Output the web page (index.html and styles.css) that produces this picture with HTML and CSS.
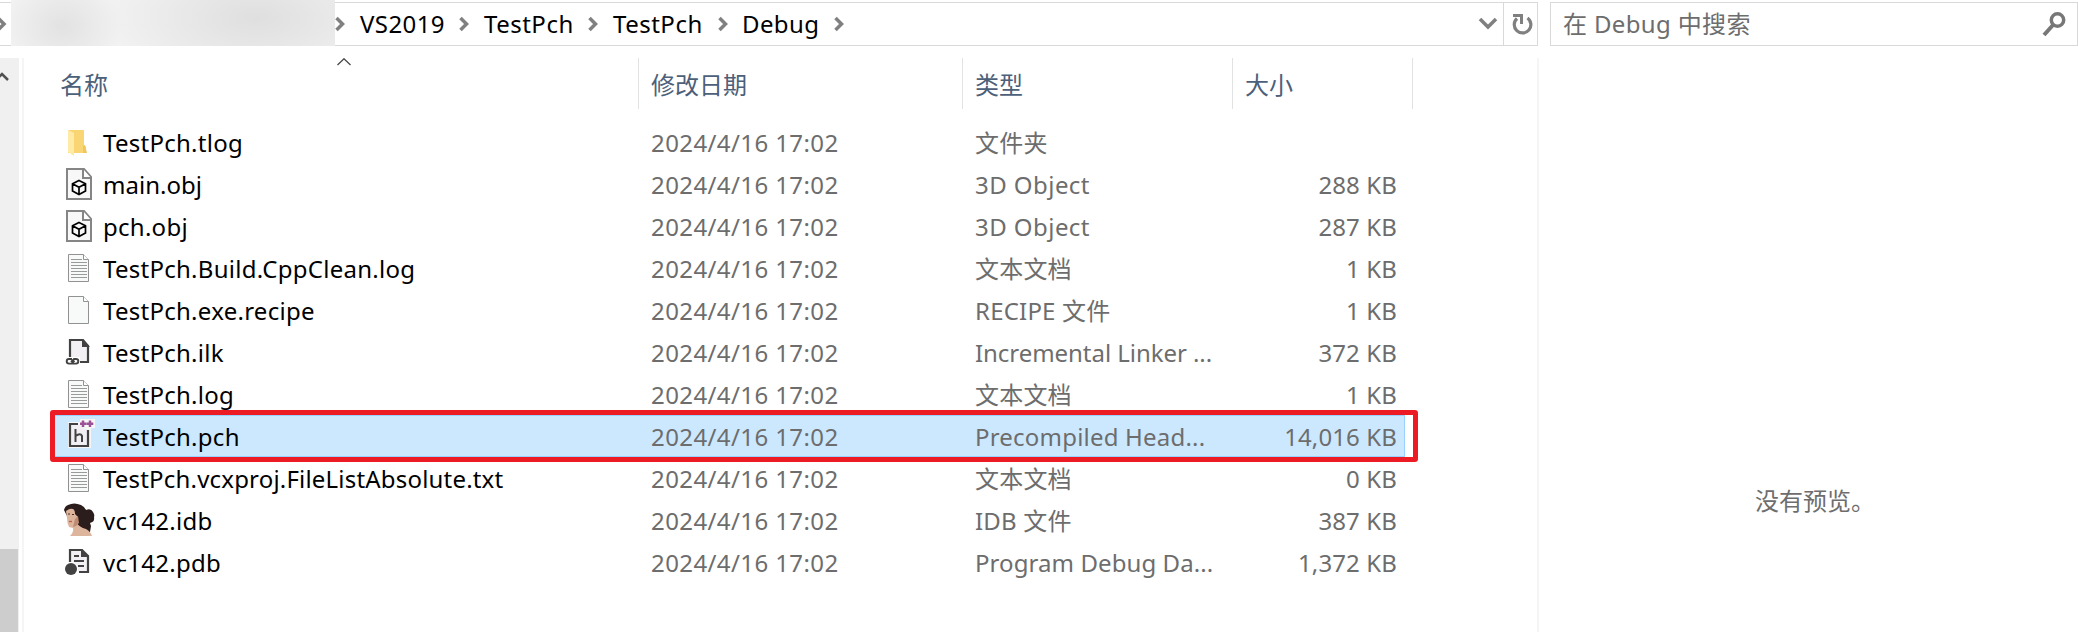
FILE: index.html
```
<!DOCTYPE html>
<html lang="zh-CN">
<head>
<meta charset="utf-8">
<title>Debug</title>
<link rel="stylesheet" href="styles.css">
</head>
<body>
<svg class="defs" aria-hidden="true">
  <symbol id="folder" viewBox="0 0 32 36"><path d="M4 6h16v15l2 2v6H4z" fill="#f9d673"/><path d="M4 6l6 3v23l-6-4z" fill="#ffeba5"/><path d="M19 22l2-1 2 8h-4z" fill="#efc85d"/></symbol>
  <symbol id="obj" viewBox="0 0 32 36"><path d="M3 3h17l7 8v22H3z" fill="#f8f8f8" stroke="#858585" stroke-width="2"/><path d="M19 3v9h8" fill="#fff" stroke="#858585" stroke-width="2"/><path d="M15 14.500l6.500 3.200v7.200L15 28.500l-6.500-3.600v-7.200zM8.500 17.700l6.500 3.500 6.500-3.500M15 21.200v7" fill="none" stroke="#000" stroke-width="1.700"/></symbol>
  <symbol id="page" viewBox="0 0 32 36"><path d="M4.500 4.500h15l5 5v22h-20z" fill="#f8f9f9" stroke="#929292"/><path d="M19.500 4.500v5h5" fill="#fff" stroke="#929292"/></symbol>
  <symbol id="text" viewBox="0 0 32 36"><use href="#page"/><path d="M7 9.500h11M7 12.500h16M7 15.500h16M7 18.500h16M7 21.500h16M7 24.500h16M7 27.500h16" stroke="#9a9a9a"/></symbol>
  <symbol id="ilk" viewBox="0 0 32 36"><path d="M6 23V6h13l5 6v16h-8" fill="#f2f0f4" stroke="#424242" stroke-width="2.200"/><path d="M18 5v8h8z" fill="#424242"/><rect x="1" y="23" width="15" height="9" fill="#fff"/><path d="M8 25H5a2.300 2.300 0 0 0 0 4.600h2.500l3-3M8 29.600h4a2.300 2.300 0 0 0 0-4.600h-2l-3 3" fill="none" stroke="#424242" stroke-width="1.900"/></symbol>
  <symbol id="pch" viewBox="0 0 32 36"><path d="M4 4h12V1h15v9h-4v20H4z" fill="#f6f6f6"/><path d="M14 6H6v22h18V12" fill="#f1eff3" stroke="#424242" stroke-width="2.200"/><path d="M11.500 11v13M11.500 18q5-3.500 6.500 0v6" fill="none" stroke="#424242" stroke-width="2"/><path d="M19 2.500v6.500M16 5.700h6.500M26 2.500v6.500M22.800 5.700h6.500" stroke="#9b4f96" stroke-width="2.500"/></symbol>
  <symbol id="portrait" viewBox="0 0 32 36"><path d="M1 8Q2 4 5 3q6-3 13 0 4 2 5 5 5-2 7 2 2 3 1 5 1 5-4 6l1 3-1 6-5 2-8-5-3-8-7-5z" fill="#2b1d1c"/><path d="M3 9q4-3 7-2 2 1 2 5l3 3-1 6q2 4 9 6 5 3 6 7H7q4-4 3-8l-4-1q-2-4-2-9z" fill="#ddb59c"/><path d="M5 12h2M9 12.500h2" stroke="#4b302a"/><path d="M6 19.500h3" stroke="#bd5a50" stroke-width="1.300"/><path d="M12 17l3-3 1 7-3 3-3 1z" fill="#bd8b73"/></symbol>
  <symbol id="pdb" viewBox="0 0 32 36"><path d="M6 18V6h12l6 6v16h-9" fill="#f2f0f4" stroke="#424242" stroke-width="2.200"/><path d="M17 5v8h8zM10 11h5v2h-5zM10 16h10v2H10zM14 21h6v2h-6z" fill="#424242"/><circle cx="7" cy="25" r="7" fill="#fff"/><circle cx="7" cy="25" r="6" fill="#424242"/></symbol>
  <symbol id="chev" viewBox="0 0 10 16"><path d="M1.500 2l6 6-6 6" fill="none" stroke="#808080" stroke-width="3.500"/></symbol>
</svg>
<div class="toolbar">
  <div class="address">
    <svg class="edge-chevron"><use href="#chev"/></svg>
    <div class="hidden-path"></div>
    <svg class="chevron"><use href="#chev"/></svg><span class="crumb year">VS2019</span>
    <svg class="chevron"><use href="#chev"/></svg><span class="crumb project">TestPch</span>
    <svg class="chevron"><use href="#chev"/></svg><span class="crumb project">TestPch</span>
    <svg class="chevron"><use href="#chev"/></svg><span class="crumb debug">Debug</span>
    <svg class="chevron"><use href="#chev"/></svg>
    <svg class="dropdown" viewBox="0 0 20 16"><path d="M2 3l8 8 8-8" fill="none" stroke="#808080" stroke-width="3.500"/></svg>
    <div class="refresh"><svg viewBox="0 0 22 26"><path d="M6 7.500A8.300 8.300 0 1 0 16.500 7" fill="none" stroke="#808080" stroke-width="3.200"/><path d="M2 3h10v10H9V6H2z" fill="#808080"/></svg></div>
  </div>
  <div class="search"><span>在 Debug 中搜索</span><svg viewBox="0 0 26 26"><circle cx="16.500" cy="9" r="6.200" fill="none" stroke="#777" stroke-width="3.500"/><path d="M12 14L3 24" stroke="#777" stroke-width="4"/></svg></div>
</div>
<main class="body">
  <div class="scrollbar"><svg class="up" viewBox="0 0 10 10"><path d="M-4 8l6-6 6 6" fill="none" stroke="#505050" stroke-width="2.500"/></svg><div class="thumb"></div></div>
  <section class="files">
    <div class="columns">
      <div class="col col-name">名称<svg class="sort" viewBox="0 0 14 8"><path d="M.5 7L7 .7 13.500 7" fill="none" stroke="#444" stroke-width="1.200"/></svg></div>
      <div class="col">修改日期</div><div class="col">类型</div><div class="col">大小</div>
    </div>
    <div class="row"><svg><use href="#folder"/></svg><span class="name">TestPch.tlog</span><span class="date">2024/4/16 17:02</span><span class="type">文件夹</span><span class="size"></span></div>
    <div class="row"><svg><use href="#obj"/></svg><span class="name plain">main.obj</span><span class="date">2024/4/16 17:02</span><span class="type wide">3D Object</span><span class="size">288 KB</span></div>
    <div class="row"><svg><use href="#obj"/></svg><span class="name">pch.obj</span><span class="date">2024/4/16 17:02</span><span class="type wide">3D Object</span><span class="size">287 KB</span></div>
    <div class="row"><svg><use href="#text"/></svg><span class="name">TestPch.Build.CppClean.log</span><span class="date">2024/4/16 17:02</span><span class="type">文本文档</span><span class="size">1 KB</span></div>
    <div class="row"><svg><use href="#page"/></svg><span class="name">TestPch.exe.recipe</span><span class="date">2024/4/16 17:02</span><span class="type">RECIPE 文件</span><span class="size">1 KB</span></div>
    <div class="row"><svg><use href="#ilk"/></svg><span class="name">TestPch.ilk</span><span class="date">2024/4/16 17:02</span><span class="type tight">Incremental Linker ...</span><span class="size">372 KB</span></div>
    <div class="row"><svg><use href="#text"/></svg><span class="name">TestPch.log</span><span class="date">2024/4/16 17:02</span><span class="type">文本文档</span><span class="size">1 KB</span></div>
    <div class="row selected"><svg><use href="#pch"/></svg><span class="name">TestPch.pch</span><span class="date">2024/4/16 17:02</span><span class="type">Precompiled Head...</span><span class="size">14,016 KB</span><div class="highlight"></div></div>
    <div class="row"><svg><use href="#text"/></svg><span class="name long">TestPch.vcxproj.FileListAbsolute.txt</span><span class="date">2024/4/16 17:02</span><span class="type">文本文档</span><span class="size">0 KB</span></div>
    <div class="row"><svg class="portrait"><use href="#portrait"/></svg><span class="name">vc142.idb</span><span class="date">2024/4/16 17:02</span><span class="type">IDB 文件</span><span class="size">387 KB</span></div>
    <div class="row"><svg><use href="#pdb"/></svg><span class="name">vc142.pdb</span><span class="date">2024/4/16 17:02</span><span class="type program">Program Debug Da...</span><span class="size">1,372 KB</span></div>
  </section>
  <aside class="preview">没有预览。</aside>
</main>
</body>
</html>
```
FILE: styles.css
```
* { box-sizing: border-box; }
body { margin: 0; width: 2078px; height: 632px; overflow: hidden; background: #fff; color: #000; font: 24px/42px "Noto Sans", "Noto Sans CJK SC", sans-serif; white-space: nowrap; }
.defs { display: none; }
svg { flex: none; overflow: hidden; }
.toolbar { display: flex; gap: 12px; height: 58px; }
.address { display: flex; align-items: center; width: 1538px; height: 44px; margin-top: 2px; border: 1px solid #d9d9d9; border-left: 0; }
.edge-chevron { width: 11px; height: 16px; margin-left: -4px; margin-right: 4px; }
.hidden-path { flex: none; width: 324px; height: 46px; margin-top: -2px; background: radial-gradient(ellipse 60px 50px at 52px 26px, #e2e2e2, transparent), radial-gradient(ellipse 150px 70px at 245px 18px, #dfdfdf, transparent), #f2f2f2; }
.chevron { width: 10px; height: 16px; }
.crumb { flex: none; height: 42px; line-height: 42px; padding-left: 15px; }
.year { width: 114px; letter-spacing: .4px; }
.project { width: 119px; letter-spacing: .5px; }
.project + .chevron + .project { width: 120px; }
.debug { width: 106px; padding-left: 14px; letter-spacing: .4px; }
.dropdown { width: 20px; height: 16px; margin-left: auto; margin-right: 5px; }
.refresh { display: flex; align-items: center; justify-content: center; width: 34px; height: 42px; padding-left: 2px; border-left: 1px solid #d9d9d9; }
.refresh svg { width: 22px; height: 26px; }
.search { display: flex; align-items: center; justify-content: space-between; width: 528px; height: 44px; margin-top: 2px; padding: 0 10px 0 12px; border: 1px solid #d9d9d9; color: #6d6d6d; letter-spacing: .35px; }
.search svg { width: 26px; height: 26px; }
.body { display: flex; height: 574px; }
.scrollbar { display: flex; flex-direction: column; width: 19px; background: #f0f0f0; }
.up { width: 10px; height: 10px; margin-top: 14px; }
.thumb { width: 18px; height: 83px; margin-top: auto; background: #cdcdcd; }
.files { width: 1517px; margin-left: 3px; border-left: 2px solid #f5f5f5; border-right: 2px solid #f5f5f5; }
.columns { display: grid; grid-template-columns: 615px 324px 270px 180px; height: 51px; margin-bottom: 12px; color: #4c607a; }
.col { position: relative; height: 51px; padding: 6px 0 0 12px; border-right: 1px solid #e2e2e2; }
.col-name { padding-left: 36px; }
.sort { position: absolute; left: 313px; top: 0; width: 14px; height: 8px; }
.row { position: relative; display: grid; grid-template-columns: 39px 548px 324px 240px 182px; width: 1352px; height: 42px; margin-left: 29px; padding-left: 11px; color: #6d6d6d; line-height: 44px; }
.row svg { width: 32px; height: 36px; margin-top: 3px; }
.row .portrait { margin-left: -1px; }
.name { color: #000; letter-spacing: .27px; }
.plain { letter-spacing: .03px; }
.long { letter-spacing: .19px; }
.type { letter-spacing: .2px; }
.wide { letter-spacing: .45px; }
.tight { letter-spacing: -.05px; }
.program { letter-spacing: .08px; }
.size { text-align: right; letter-spacing: .12px; }
.date { letter-spacing: .4px; }
.selected { background: #cce8ff; border: 1px solid #99d1ff; padding-left: 10px; line-height: 42px; }
.selected svg { margin-top: 2px; }
.highlight { position: absolute; left: -4px; top: -6px; width: 1368px; height: 52px; border: 5px solid #ed1c24; border-radius: 3px; }
.preview { flex: 1; padding: 422px 0 0 216px; color: #6d6d6d; }
```
